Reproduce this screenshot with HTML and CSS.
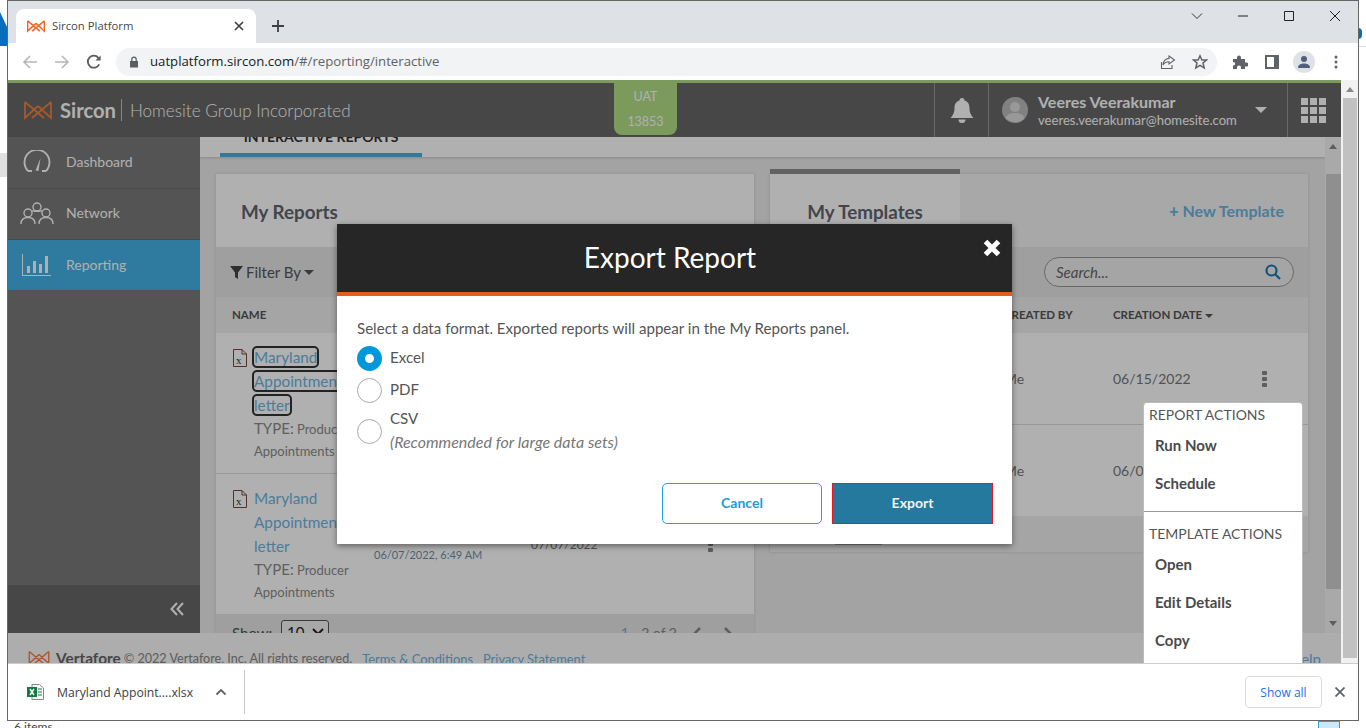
FILE: index.html
```html
<!DOCTYPE html>
<html>
<head>
  <meta charset="utf-8">
  <link rel="stylesheet" href="styles.css">
</head>
<body>
  <!-- desktop bits peeking out from behind the browser window -->
  <div class="desk-blue"></div>
  <div class="desk-gray"></div>
  <div class="desk-dot"></div>
  <div class="desk-line"></div>
  <div class="desk-text">6 items</div>
  <div class="desk-icon"></div>

  <div class="window">
    <div class="tabstrip">
      <div class="tab">
        <svg class="tab-logo" width="18" height="14" viewBox="0 0 28 20" fill="none" stroke="#f0682a" stroke-width="2.4"><path d="M1 2L20 18M1 2V18L14 6M27 2V18L14 6M27 2L8 18"/></svg>
        <span class="tab-title">Sircon Platform</span>
        <svg width="10" height="10" viewBox="0 0 10 10" stroke="#3c4043" stroke-width="1.6"><path d="M1 1L9 9M9 1L1 9"/></svg>
      </div>
      <svg class="new-tab" width="14" height="14" viewBox="0 0 14 14" stroke="#3c4043" stroke-width="1.8"><path d="M7 1V13M1 7H13"/></svg>
      <div class="win-controls">
        <svg width="12" height="12" viewBox="0 0 12 12" fill="none" stroke="#333"><path d="M1 3.5L6 8.5L11 3.5"/></svg>
        <svg width="12" height="12" viewBox="0 0 12 12" fill="none" stroke="#222"><path d="M1 6H11"/></svg>
        <svg width="12" height="12" viewBox="0 0 12 12" fill="none" stroke="#222"><path d="M1.5 1.5H10.5V10.5H1.5Z"/></svg>
        <svg width="12" height="12" viewBox="0 0 12 12" fill="none" stroke="#222"><path d="M1 1L11 11M11 1L1 11"/></svg>
      </div>
    </div>

    <div class="toolbar">
      <div class="tool"><svg width="16" height="16" viewBox="0 0 16 16" fill="none" stroke="#b4b6b9" stroke-width="1.6"><path d="M15 8H2M8 2L2 8L8 14"/></svg></div>
      <div class="tool"><svg width="16" height="16" viewBox="0 0 16 16" fill="none" stroke="#b4b6b9" stroke-width="1.6"><path d="M1 8H14M8 2L14 8L8 14"/></svg></div>
      <div class="tool"><svg width="16" height="16" viewBox="0 0 16 16" fill="none" stroke="#5a5d61" stroke-width="1.8"><path d="M13.2 10.4A6 6 0 1 1 12.4 3.8"/><path d="M14.6 1.4V6.6H9.4Z" fill="#5a5d61" stroke="none"/></svg></div>
      <div class="omnibox">
        <svg width="10" height="12" viewBox="0 0 10 12"><path d="M1 5H9V11.500H1Z" fill="#5a5d61"/><path d="M2.800 5V3.400A2.200 2.200 0 0 1 7.200 3.400V5" fill="none" stroke="#5a5d61" stroke-width="1.200"/></svg>
        <span class="url">uatplatform.sircon.com<span class="url-path">/#/reporting/interactive</span></span>
        <svg class="omni-share" width="16" height="16" viewBox="0 0 16 16" fill="none" stroke="#5f6368" stroke-width="1.100"><path d="M1.500 8V14.500H12V11"/><path d="M9 2L14.500 6L9 10V7.700C6 7.700 4 9 3 11C3 7.500 5.500 4.600 9 4.400Z"/></svg>
        <svg class="omni-star" width="16" height="16" viewBox="0 0 16 16" fill="none" stroke="#5f6368" stroke-width="1.500"><path d="M8 1.800L9.900 6H14.500L11 9L12.200 13.900L8 11.300L3.800 13.900L5 9L1.500 6H6.100Z"/></svg>
      </div>
      <div class="tool tool-first"><svg width="16" height="16" viewBox="0 0 16 16" fill="#5f6368"><path d="M1 5H5V3.500A2 2 0 0 1 9 3.500V5H13V8.500H14.500A2 2 0 0 1 14.500 12.500H13V15H9V13.500A2 2 0 0 0 5 13.500V15H1V11.500H2A2 2 0 0 0 2 8H1Z"/></svg></div>
      <div class="tool"><svg width="14" height="14" viewBox="0 0 14 14"><path d="M0 0H14V14H0Z" fill="#5f6368"/><path d="M2 2H9V12H2Z" fill="#fff"/></svg></div>
      <div class="tool"><div class="profile"><svg width="14" height="14" viewBox="0 0 14 14" fill="#50607c"><circle cx="7" cy="4" r="3"/><path d="M1 13C1 9.500 4 8.500 7 8.500S13 9.500 13 13Z"/></svg></div></div>
      <div class="tool"><svg width="4" height="14" viewBox="0 0 4 14" fill="#5f6368"><circle cx="2" cy="2" r="1.500"/><circle cx="2" cy="7" r="1.500"/><circle cx="2" cy="12" r="1.500"/></svg></div>
    </div>

    <div class="viewport">
      <div class="app">
        <div class="accent-line"></div>
        <div class="topbar">
          <div class="brand">
            <svg width="28" height="20" viewBox="0 0 28 20" fill="none" stroke="#f0803f" stroke-width="1.800"><path d="M1 2L20 18M1 2V18L14 6M27 2V18L14 6M27 2L8 18"/></svg>
            <span class="brand-name">Sircon</span>
            <span class="brand-org">Homesite Group Incorporated</span>
          </div>
          <div class="env-badge"><span>UAT</span><span>13853</span></div>
          <div class="topbar-space"></div>
          <div class="topbar-cell bell-cell">
            <svg width="24" height="25" viewBox="0 0 24 25" fill="#fff"><path d="M12 0A2.500 2.500 0 0 1 14.500 2.500C18 3.500 19.500 6.500 19.500 10C19.500 15 21 17 23.500 20H.5C3 17 4.500 15 4.500 10C4.500 6.500 6 3.500 9.500 2.500A2.500 2.500 0 0 1 12 0ZM8.500 21.500H15.500A3.500 3.500 0 0 1 8.500 21.500Z"/></svg>
          </div>
          <div class="topbar-cell user-cell">
            <svg width="26" height="26" viewBox="0 0 26 26"><circle cx="13" cy="13" r="13" fill="#bbb"/><circle cx="13" cy="10" r="5" fill="#ddd"/><path d="M3.500 21C5 17 9 16 13 16S21 17 22.500 21A13 13 0 0 1 3.500 21Z" fill="#ddd"/></svg>
            <div class="user-info">
              <div class="user-name">Veeres Veerakumar</div>
              <div class="user-mail">veeres.veerakumar@homesite.com</div>
            </div>
            <div class="user-caret"></div>
          </div>
          <div class="topbar-cell apps-cell">
            <div class="apps-grid"><i></i><i></i><i></i><i></i><i></i><i></i><i></i><i></i><i></i></div>
          </div>
        </div>

        <div class="workspace">
          <div class="sidebar">
            <div class="nav-item nav-dash">
              <svg width="28" height="24" viewBox="0 0 28 24" fill="none" stroke="#fff" stroke-width="1.900"><path d="M5 21A12.500 12.500 0 1 1 23 21"/><path d="M5 21H9M19 21H23"/><path d="M12.500 20.500L17.500 8L15.500 21Z" fill="#fff" stroke="none"/></svg>
              <span>Dashboard</span>
            </div>
            <div class="nav-item nav-net">
              <svg width="34" height="24" viewBox="0 0 34 24" fill="none" stroke="#fff" stroke-width="1.400"><circle cx="17" cy="6" r="4"/><circle cx="8" cy="12" r="4"/><circle cx="26" cy="12" r="4"/><path d="M1 23C1 18 4 16.500 8 16.500S15 18 15 23M19 23C19 18 22 16.500 26 16.500S33 18 33 23M12 9.500C13 10.500 21 10.500 22 9.500"/></svg>
              <span>Network</span>
            </div>
            <div class="nav-item nav-active">
              <svg width="30" height="22" viewBox="0 0 30 22" fill="#fff"><path d="M0 0H1V21H29V22H0Z"/><path d="M5 12H8V19H5ZM11 7H14V19H11ZM17 10H20V19H17ZM23 2H26V19H23Z"/></svg>
              <span>Reporting</span>
            </div>
            <div class="nav-fill"></div>
            <div class="nav-collapse">
              <svg width="14" height="14" viewBox="0 0 14 14" fill="none" stroke="#fff" stroke-width="2"><path d="M7 1L1.500 7L7 13M13 1L7.500 7L13 13"/></svg>
            </div>
          </div>

          <div class="main">
            <div class="page-tabs"><div class="page-tab">INTERACTIVE REPORTS</div></div>
            <div class="panels">
              <section class="panel panel-reports">
                <div class="panel-head"><h2>My Reports</h2></div>
                <div class="panel-filter">
                  <svg width="13" height="13" viewBox="0 0 13 13" fill="#444"><path d="M0 0H13L8 6.500V13L5 11V6.500Z"/></svg>
                  <span>Filter By</span><i class="caret"></i>
                </div>
                <div class="col-head"><span>NAME</span></div>
                <div class="report-row report-row-line">
                  <div class="report-name">
                    <svg class="file-icon" width="14" height="18" viewBox="0 0 14 18" fill="none" stroke="#7a4540"><path d="M.5.5H9L13.500 5V17.500H.5Z"/><path d="M9 .5V5H13.500"/><text x="3" y="15" font-size="11" font-family="Liberation Serif" fill="#333" stroke="none">x</text></svg>
                    <div>
                      <a class="report-link report-link-focus">Maryland Appointment letter</a>
                      <div class="report-type"><b>TYPE:</b> Producer Appointments</div>
                    </div>
                  </div>
                </div>
                <div class="report-row">
                  <div class="report-name">
                    <svg class="file-icon" width="14" height="18" viewBox="0 0 14 18" fill="none" stroke="#7a4540"><path d="M.5.5H9L13.500 5V17.500H.5Z"/><path d="M9 .5V5H13.500"/><text x="3" y="15" font-size="11" font-family="Liberation Serif" fill="#333" stroke="none">x</text></svg>
                    <div>
                      <a class="report-link">Maryland Appointment letter</a>
                      <div class="report-type"><b>TYPE:</b> Producer Appointments</div>
                    </div>
                  </div>
                  <div class="report-when"><span>Me</span><span>06/07/2022, 6:49 AM</span></div>
                  <div class="report-date">07/07/2022</div>
                  <div class="kebab"><i></i><i></i><i></i></div>
                </div>
                <div class="panel-pager">
                  <span class="pager-show">Show:</span><span class="pager-select">10 <svg width="12" height="8" viewBox="0 0 12 8" fill="none" stroke="#222" stroke-width="2"><path d="M1 1L6 6L11 1"/></svg></span>
                  <span class="pager-count"><span class="pager-first">1</span> - 2 of 2</span>
                  <svg class="pager-prev" width="10" height="14" viewBox="0 0 10 14" fill="none" stroke="#888" stroke-width="2.500"><path d="M8 1L2 7L8 13"/></svg>
                  <svg class="pager-next" width="10" height="14" viewBox="0 0 10 14" fill="none" stroke="#888" stroke-width="2.500"><path d="M2 1L8 7L2 13"/></svg>
                </div>
              </section>

              <section class="panel panel-templates">
                <div class="panel-head panel-head-tabs">
                  <div class="panel-tab"><h2>My Templates</h2></div>
                  <a class="new-template"><b>+</b> New Template</a>
                </div>
                <div class="panel-filter panel-filter-end">
                  <div class="search-pill"><span>Search...</span>
                    <svg width="16" height="16" viewBox="0 0 16 16" fill="none" stroke="#1b7ab0" stroke-width="2.200"><circle cx="6.500" cy="6.500" r="5"/><path d="M10 10L15 15"/></svg>
                  </div>
                </div>
                <div class="template-grid col-head">
                  <span>TEMPLATE NAME</span><span>CREATED BY</span><span>CREATION DATE <i class="caret caret-small"></i></span>
                </div>
                <div class="template-grid template-row template-row-line">
                  <span>Maryland Appointment letter</span><span>Me</span><span>06/15/2022</span>
                  <div class="kebab"><i></i><i></i><i></i></div>
                </div>
                <div class="template-grid template-row">
                  <span>Maryland Appointment letter</span><span>Me</span><span>06/07/2022</span>
                </div>
                <div class="template-foot"><span class="foot-select"></span></div>
              </section>
            </div>
          </div>

          <div class="inner-scroll">
            <i class="arrow-up"></i>
            <div class="inner-thumb"></div>
            <i class="arrow-down"></i>
          </div>
        </div>

        <div class="footer">
          <svg width="22" height="15" viewBox="0 0 28 20" fill="none" stroke="#f0803f" stroke-width="1.800"><path d="M1 2L20 18M1 2V18L14 6M27 2V18L14 6M27 2L8 18"/></svg>
          <span class="footer-brand">Vertafore</span>
          <span class="footer-copy">© 2022 Vertafore, Inc. All rights reserved.</span>
          <a class="footer-link">Terms &amp; Conditions</a>
          <a class="footer-link">Privacy Statement</a>
          <a class="footer-link footer-help">Help</a>
        </div>

        <div class="overlay">
          <div class="modal">
            <div class="modal-head">
              <h1>Export Report</h1>
              <svg class="modal-close" width="18" height="18" viewBox="0 0 18 18" fill="none" stroke="#fff" stroke-width="5"><path d="M2.500 2.500L15.500 15.500M15.500 2.500L2.500 15.500"/></svg>
            </div>
            <div class="modal-body">
              <p class="modal-text">Select a data format. Exported reports will appear in the My Reports panel.</p>
              <div class="radio-row radio-row-excel"><span class="radio radio-on"></span><span class="radio-label">Excel</span></div>
              <div class="radio-row radio-row-pdf"><span class="radio"></span><span class="radio-label">PDF</span></div>
              <div class="radio-row radio-row-csv"><span class="radio"></span>
                <div class="radio-label"><div>CSV</div><div class="radio-note">(Recommended for large data sets)</div></div>
              </div>
              <div class="modal-buttons">
                <button class="btn-cancel">Cancel</button>
                <button class="btn-export">Export</button>
              </div>
            </div>
          </div>
        </div>

        <div class="menu">
          <div class="menu-title">REPORT ACTIONS</div>
          <div class="menu-item menu-run">Run Now</div>
          <div class="menu-item">Schedule</div>
          <div class="menu-sep"></div>
          <div class="menu-title menu-title-2">TEMPLATE ACTIONS</div>
          <div class="menu-item menu-open">Open</div>
          <div class="menu-item">Edit Details</div>
          <div class="menu-item">Copy</div>
        </div>
      </div>

      <div class="outer-scroll">
        <i class="arrow-up"></i>
        <div class="outer-thumb"></div>
      </div>
    </div>

    <div class="downloads">
      <div class="dl-item">
        <svg width="17" height="16" viewBox="0 0 17 16"><path d="M5 .5H12.500L16.500 4V15.500H5Z" fill="#fff" stroke="#888"/><path d="M11 5H15M11 8H15M11 11H15" stroke="#1e7145"/><path d="M0 3H10V13H0Z" fill="#107c41"/><path d="M3 5L7 11M7 5L3 11" stroke="#fff" stroke-width="1.400"/></svg>
        <span class="dl-name">Maryland Appoint....xlsx</span>
        <svg width="12" height="8" viewBox="0 0 12 8" fill="none" stroke="#5f6368" stroke-width="1.800"><path d="M1.500 6.500L6 2L10.500 6.500"/></svg>
      </div>
      <div class="dl-sep"></div>
      <div class="dl-space"></div>
      <button class="dl-all">Show all</button>
      <svg class="dl-close" width="10" height="10" viewBox="0 0 10 10" stroke="#5f6368" stroke-width="1.800"><path d="M.5.5L9.500 9.500M9.500.5L.5 9.500"/></svg>
    </div>
  </div>
</body>
</html>
```

FILE: styles.css
```css
* {
  box-sizing: border-box;
}

html, body {
  margin: 0;
  height: 100%;
  overflow: hidden;
  background: #fff;
}

body {
  font-family: "Lato", "Noto Sans", sans-serif;
  font-size: 14px;
}

h1, h2, p {
  margin: 0;
}

/* desktop behind the window */
.desk-blue {
  position: absolute;
  left: 0;
  top: 12px;
  width: 8px;
  height: 34px;
  background: #0a6cbc;
  clip-path: polygon(0 0, 100% 50%, 100% 100%, 0 100%);
}

.desk-gray {
  position: absolute;
  left: 0;
  top: 153px;
  width: 8px;
  height: 24px;
  background: #e0e0e0;
}

.desk-dot {
  position: absolute;
  left: 1358px;
  top: 28px;
  width: 4px;
  height: 11px;
  background: #0a6cbc;
  border-radius: 0 6px 6px 0;
}

.desk-line {
  position: absolute;
  left: 1358px;
  top: 46px;
  width: 8px;
  height: 1px;
  background: #ddd;
}

.desk-text {
  position: absolute;
  left: 14px;
  top: 719px;
  font-size: 12px;
  color: #444;
}

.desk-icon {
  position: absolute;
  left: 1318px;
  top: 721px;
  width: 22px;
  height: 8px;
  background: #cfe8f7;
  border: 1px solid #3a9ad9;
}

/* browser window */
.window {
  position: absolute;
  left: 7px;
  top: 0;
  width: 1352px;
  height: 721px;
  border: 1px solid #666;
  display: flex;
  flex-direction: column;
  background: #fff;
  z-index: 1;
}

.tabstrip {
  height: 42px;
  background: #dee1e6;
  display: flex;
  align-items: flex-end;
  padding-left: 8px;
}

.tab {
  width: 240px;
  height: 34px;
  background: #fff;
  border-radius: 8px 8px 0 0;
  display: flex;
  align-items: center;
  padding: 0 12px 0 11px;
  gap: 7px;
}

.tab-logo {
  flex: none;
}

.tab-title {
  flex: 1;
  padding-bottom: 2px;
  font-family: "Open Sans", sans-serif;
  font-size: 11.3px;
  color: #45474a;
}

.new-tab {
  margin: 0 0 10px 15px;
}

.win-controls {
  margin-left: auto;
  align-self: flex-start;
  display: flex;
  gap: 34px;
  padding: 9px 17px 0 0;
}

.toolbar {
  height: 37px;
  display: flex;
  align-items: center;
  padding: 0 6px;
  background: #fff;
}

.tool {
  width: 32px;
  height: 28px;
  display: flex;
  align-items: center;
  justify-content: center;
}

.tool-first {
  margin-left: 7px;
}

.profile {
  width: 22px;
  height: 22px;
  border-radius: 50%;
  background: #dee1e6;
  display: flex;
  align-items: center;
  justify-content: center;
}

.omnibox {
  width: 1101px;
  height: 28px;
  margin-left: 6px;
  background: #f1f3f4;
  border-radius: 14px;
  display: flex;
  align-items: center;
  padding-left: 13px;
}

.url {
  flex: 1;
  margin: 0 0 2px 11px;
  font-family: "Open Sans", sans-serif;
  font-size: 13.2px;
  color: #202124;
}

.url-path {
  color: #5f6368;
}

.omni-share {
  margin-right: 16px;
}

.omni-star {
  margin-right: 9px;
}

/* the page inside the browser */
.viewport {
  flex: 1;
  min-height: 0;
  display: flex;
}

.app {
  position: relative;
  flex: 1;
  min-width: 0;
  overflow: hidden;
  display: flex;
  flex-direction: column;
  background: #ececec;
}

.accent-line {
  height: 3px;
  flex: none;
  background: #b2df85;
}

.topbar {
  height: 54px;
  flex: none;
  display: flex;
  background: #686868;
  color: #fff;
}

.brand {
  width: 606px;
  display: flex;
  align-items: center;
  padding-left: 16px;
}

.brand-name {
  margin-left: 8px;
  padding-right: 5px;
  border-right: 1px solid #ffb27a;
  font-size: 20.2px;
  font-weight: 700;
  line-height: 22px;
}

.brand-org {
  margin-left: 8px;
  font-size: 17.1px;
  font-weight: 300;
}

.env-badge {
  width: 63px;
  height: 52px;
  background: #b2df85;
  border-radius: 0 0 8px 8px;
  display: flex;
  flex-direction: column;
  align-items: center;
  justify-content: space-between;
  font-size: 12.5px;
  color: #fff;
  padding: 6px 0 6px;
}

.topbar-space {
  flex: 1;
}

.topbar-cell {
  display: flex;
  align-items: center;
  border-left: 1px solid #999;
}

.bell-cell {
  width: 54px;
  justify-content: center;
}

.user-cell {
  width: 299px;
  padding-left: 13px;
  gap: 10px;
}

.user-info {
  width: 207px;
}

.user-name {
  font-size: 16px;
  font-weight: 700;
  line-height: 20px;
}

.user-mail {
  font-size: 13.1px;
  line-height: 16px;
  white-space: nowrap;
}

.user-caret {
  border: 6px solid transparent;
  border-top: 6px solid #fff;
  border-bottom: 0;
}

.apps-cell {
  width: 54px;
  justify-content: center;
  padding-right: 3px;
}

.apps-grid {
  display: grid;
  grid-template-columns: repeat(3, 7px);
  grid-auto-rows: 7px;
  gap: 2px;
}

.apps-grid i {
  background: #fff;
}

.workspace {
  flex: 1;
  min-height: 0;
  display: flex;
}

.sidebar {
  width: 192px;
  flex: none;
  display: flex;
  flex-direction: column;
  background: #7a7a7a;
  color: #fff;
}

.nav-item {
  height: 50px;
  display: flex;
  align-items: center;
  padding-left: 12px;
  position: relative;
}

.nav-dash {
  height: 52px;
  padding-bottom: 1px;
  border-bottom: 1px solid #6c6c6c;
}

.nav-net {
  height: 51px;
  padding-bottom: 2px;
  border-bottom: 1px solid #6c6c6c;
}

.nav-item svg {
  width: 34px;
}

.nav-item span {
  position: absolute;
  left: 58px;
  margin-top: -2px;
  font-size: 14px;
}

.nav-active {
  background: #44b1e6;
}

.nav-fill {
  flex: 1;
}

.nav-collapse {
  height: 48px;
  background: #686868;
  display: flex;
  align-items: center;
  justify-content: flex-end;
  padding-right: 16px;
}

.main {
  flex: 1;
  min-width: 0;
  overflow: hidden;
}

.page-tabs {
  height: 20px;
  background: #fff;
  box-shadow: 0 1px 2px rgba(0, 0, 0, 0.15);
  padding-left: 20px;
  overflow: hidden;
}

.page-tab {
  width: 202px;
  height: 20px;
  border-bottom: 4px solid #44b1e6;
  text-align: center;
  font-size: 14px;
  font-weight: 700;
  line-height: 0;
  color: #333;
}

.panels {
  display: grid;
  grid-template-columns: 538px 538px;
  gap: 16px;
  padding: 17px 17px 0 16px;
}

.panel {
  background: #fff;
  box-shadow: 0 0 3px rgba(0, 0, 0, 0.15);
}

.panel-templates {
  align-self: start;
}

.panel-head {
  height: 73px;
  display: flex;
  align-items: center;
  padding-left: 25px;
}

.panel-head h2 {
  margin-top: 1px;
  font-size: 18.8px;
  font-weight: 700;
  color: #5f6670;
}

.panel-head-tabs {
  padding: 0 24px 0 0;
  background: #f4f4f4;
  justify-content: space-between;
}

.panel-tab {
  width: 190px;
  height: 78px;
  margin-top: -5px;
  border-top: 5px solid #8f8f8f;
  background: #fff;
  display: flex;
  align-items: center;
  justify-content: center;
}

.new-template {
  color: #6db4e0;
  font-size: 16px;
  font-weight: 700;
}

.panel-filter {
  height: 50px;
  background: #e6e6e6;
  display: flex;
  align-items: center;
  gap: 3px;
  padding-left: 14px;
  font-size: 15px;
  color: #555;
}

.panel-filter-end {
  justify-content: flex-end;
  padding-right: 14px;
}

.caret {
  display: inline-block;
  border: 5px solid transparent;
  border-top: 5px solid #555;
  border-bottom: 0;
}

.caret-small {
  border-width: 4px;
  border-top-width: 4px;
  border-bottom: 0;
  vertical-align: middle;
}

.search-pill {
  width: 250px;
  height: 30px;
  border: 1px solid #999;
  border-radius: 15px;
  background: #efefef;
  display: flex;
  align-items: center;
  justify-content: space-between;
  padding: 0 12px 0 11px;
  font-style: italic;
  font-size: 15px;
  color: #666;
}

.col-head {
  height: 36px;
  background: #efefef;
  display: flex;
  align-items: center;
  padding: 0 0 2px 16px;
  font-size: 11.5px;
  font-weight: 700;
  color: #555;
}

.report-row {
  height: 140px;
  display: grid;
  grid-template-columns: 158px 157px 168px 22px;
  align-items: center;
}

.report-row-line {
  height: 141px;
  border-bottom: 1px solid #ddd;
}

.report-name {
  display: flex;
  gap: 7px;
  padding-left: 17px;
  align-self: start;
  padding-top: 12px;
  width: 121px;
  box-sizing: content-box;
}

.file-icon {
  flex: none;
  margin-top: 4px;
}

.report-link {
  color: #6db4e0;
  font-size: 15.3px;
  line-height: 24px;
}

.report-link-focus {
  outline: 2px solid #333;
  border-radius: 3px;
}

.report-type {
  font-size: 13px;
  line-height: 22px;
  color: #8a8a8a;
}

.report-type b {
  font-size: 15px;
  font-weight: 400;
}

.report-when {
  display: flex;
  flex-direction: column;
  gap: 8px;
  font-size: 11px;
  color: #6a8fa8;
}

.report-date {
  font-size: 12px;
  color: #777;
}

.kebab {
  display: flex;
  flex-direction: column;
  gap: 2px;
  align-items: center;
}

.kebab i {
  width: 5px;
  height: 4px;
  background: #888;
  border-radius: 1px;
}

.panel-pager {
  height: 40px;
  background: #e6e6e6;
  display: flex;
  align-items: flex-start;
  padding: 6px 21px 0 16px;
  font-size: 14px;
  color: #888;
}

.pager-show {
  width: 49px;
  margin-top: 4px;
  font-size: 15px;
  color: #555;
}

.pager-select {
  width: 48px;
  height: 24px;
  border: 1px solid #555;
  border-radius: 3px;
  background: #f4f4f4;
  padding-left: 5px;
  display: flex;
  align-items: center;
  gap: 8px;
  font-size: 15px;
  color: #222;
}

.pager-count {
  margin: 4px 15px 0 auto;
}

.pager-first {
  color: #6db4e0;
}

.pager-prev,
.pager-next {
  margin-top: 7px;
}

.pager-next {
  margin-left: 21px;
}

.template-grid {
  display: grid;
  grid-template-columns: 234px 109px 130px 42px;
  align-items: center;
}

.template-grid.col-head {
  padding-left: 0;
}

.template-row {
  height: 91px;
  font-size: 14px;
  color: #777;
}

.template-row-line {
  height: 92px;
  border-bottom: 1px solid #ddd;
}

.template-foot {
  height: 36px;
  background: #efefef;
  position: relative;
}

.foot-select {
  display: block;
  width: 47px;
  height: 4px;
  margin-left: 65px;
  position: relative;
  top: 25px;
  border: 1px solid #aaa;
  border-top: 0;
}

.inner-scroll {
  width: 16px;
  flex: none;
  background: #f5f5f5;
  display: flex;
  flex-direction: column;
  align-items: center;
}

.inner-thumb {
  width: 15px;
  height: 415px;
  background: #cfcfcf;
  margin: 25px 0 32px;
}

.arrow-up {
  margin-top: 7px;
  border: 4px solid transparent;
  border-bottom: 5px solid #888;
  border-top: 0;
}

.arrow-down {
  border: 4px solid transparent;
  border-top: 5px solid #888;
  border-bottom: 0;
}

.footer {
  height: 30px;
  flex: none;
  background: #fbfbfb;
  display: flex;
  align-items: flex-start;
  padding: 17px 0 0 20px;
  overflow: hidden;
  font-size: 12.6px;
  line-height: 18px;
  color: #888;
  z-index: 1;
}

.footer-brand {
  margin: -1px 3px 0 6px;
  font-size: 15.4px;
  font-weight: 700;
  color: #666;
}

.footer-link {
  margin-left: 10px;
  font-size: 12.9px;
  color: #6db4e0;
}

.footer-help {
  margin-left: auto;
  margin-right: 20px;
  font-size: 15px;
}

/* modal */
.overlay {
  position: absolute;
  inset: 0;
  z-index: 2;
  background: rgba(0, 0, 0, 0.31);
  display: flex;
  justify-content: center;
  align-items: flex-start;
  padding-top: 144px;
}

.modal {
  width: 675px;
  height: 320px;
  background: #fff;
  box-shadow: 0 2px 6px rgba(0, 0, 0, 0.45);
  display: flex;
  flex-direction: column;
}

.modal-head {
  height: 72px;
  background: #262626;
  border-bottom: 4px solid #e85d19;
  padding: 0 9px 2px 0;
  position: relative;
  display: flex;
  align-items: center;
  justify-content: center;
}

.modal-head h1 {
  font-size: 28px;
  font-weight: 400;
  color: #fff;
}

.modal-close {
  position: absolute;
  right: 11px;
  top: 15px;
}

.modal-body {
  flex: 1;
  padding: 23px 19px 20px 20px;
  display: flex;
  flex-direction: column;
  font-size: 15.100px;
  color: #555;
}

.modal-text {
  line-height: 18px;
}

.radio-row {
  display: flex;
  align-items: center;
  gap: 8px;
}

.radio-label {
  padding-bottom: 2px;
}

.radio-row-excel {
  margin-top: 8px;
  height: 26px;
}

.radio-row-pdf {
  margin-top: 6px;
  height: 26px;
}

.radio-row-csv {
  margin-top: 3px;
  line-height: 24px;
}

.radio {
  flex: none;
  width: 25px;
  height: 25px;
  border-radius: 50%;
  border: 1px solid #aaa;
  background: #fff;
}

.radio-on {
  border: 8px solid #0098db;
}

.radio-note {
  font-size: 16px;
  font-style: italic;
  color: #777;
}

.modal-buttons {
  margin-top: auto;
  display: flex;
  justify-content: flex-end;
  gap: 10px;
}

.modal-buttons button {
  height: 41px;
  padding-bottom: 3px;
  font-family: inherit;
  font-size: 14px;
  font-weight: 700;
}

.btn-cancel {
  width: 160px;
  border: 1px solid #1fa3dc;
  border-radius: 5px;
  background: #fff;
  color: #1c9cd8;
}

.btn-export {
  width: 161px;
  border: 1px solid #f0141e;
  background: #25799f;
  color: #f2f2f2;
}

/* the actions menu sits over the modal backdrop */
.menu {
  position: absolute;
  left: 1135px;
  top: 322px;
  width: 160px;
  height: 300px;
  background: #fff;
  border: 1px solid #bbb;
  border-radius: 4px;
  z-index: 3;
  color: #4a4a4a;
}

.menu-title {
  padding: 2px 0 0 5px;
  font-size: 14px;
  line-height: 20px;
  color: #555;
}

.menu-title-2 {
  padding-top: 12px;
}

.menu-item {
  padding-left: 11px;
  font-size: 15px;
  font-weight: 700;
  line-height: 38px;
}

.menu-run {
  margin-top: 1px;
}

.menu-open {
  margin-top: 1px;
}

.menu-sep {
  height: 1px;
  background: #999;
  margin-top: 9px;
}

/* the browser's own scrollbar, not dimmed */
.outer-scroll {
  width: 17px;
  flex: none;
  background: #f1f1f1;
  display: flex;
  flex-direction: column;
  align-items: center;
}

.outer-thumb {
  width: 14px;
  flex: 1;
  margin: 6px 0 5px;
  background: #c1c1c1;
}

/* download shelf */
.downloads {
  height: 57px;
  flex: none;
  border-top: 1px solid #ccc;
  background: #fff;
  display: flex;
  align-items: center;
}

.dl-item {
  width: 236px;
  display: flex;
  align-items: center;
  padding-left: 19px;
  gap: 13px;
}

.dl-name {
  font-family: "Open Sans", sans-serif;
  font-size: 12.200px;
  color: #3c4043;
  width: 137px;
  white-space: nowrap;
  margin-right: 8px;
}

.dl-sep {
  width: 1px;
  height: 44px;
  background: #ccc;
}

.dl-space {
  flex: 1;
}

.dl-all {
  width: 77px;
  height: 32px;
  border: 1px solid #dadce0;
  border-radius: 4px;
  background: #fff;
  color: #1a73e8;
  font-family: "Open Sans", sans-serif;
  font-size: 12px;
}

.dl-close {
  margin: 0 13px;
}
```
